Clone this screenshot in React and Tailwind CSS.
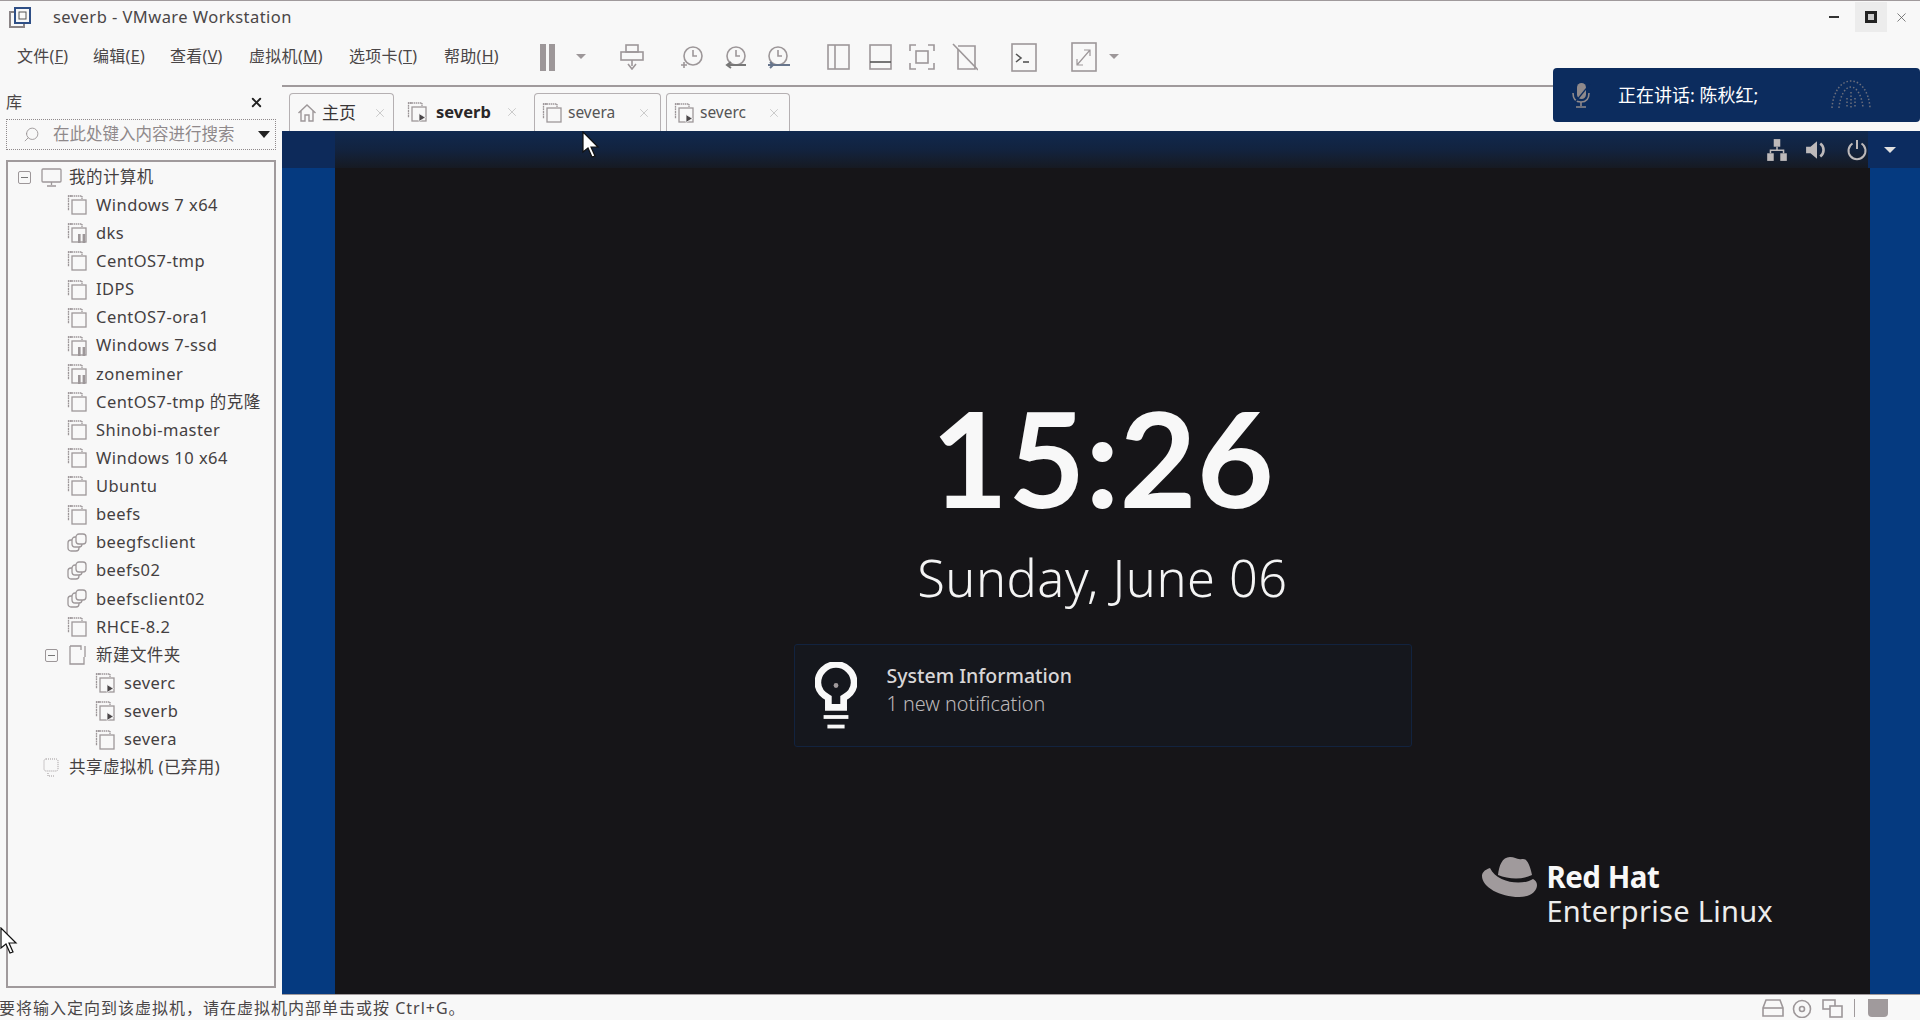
import React from "react";
import { X, Search } from "lucide-react";

const G = "#9d9799";
const UI = { fontFamily: '"Noto Sans", "Noto Sans CJK SC", sans-serif' };

function VmIcon({ kind = "plain" }) {
  return (
    <svg width="20" height="20" viewBox="0 0 20 20" fill="none" stroke={G} strokeWidth="1.3" className="shrink-0">
      {kind === "shared" ? (
        <>
          <rect x="1" y="7" width="11" height="11" rx="3" />
          <rect x="5" y="4" width="10" height="10" rx="3" fill="#f8f8f8" />
          <rect x="9" y="1" width="10" height="10" rx="3" fill="#f8f8f8" />
        </>
      ) : (
        <>
          <path d="M5 1H1.5V16" strokeDasharray="2 .6" />
          <path d="M1 1H15V4" strokeDasharray="1.4 .6" />
          <rect x="5" y="5" width="14" height="14" fill="#f8f8f8" />
        </>
      )}
      {kind === "pause" && (
        <>
          <rect x="11" y="11" width="2.6" height="9" fill={G} stroke="none" />
          <rect x="15.6" y="11" width="2.6" height="9" fill={G} stroke="none" />
        </>
      )}
      {kind === "play" && <path d="M12 11.5L18.5 15.5L12 19.5Z" fill="#4a4648" stroke="#f8f8f8" strokeWidth=".8" />}
    </svg>
  );
}

function Minus() {
  return (
    <span className="flex h-[13px] w-[13px] shrink-0 items-center justify-center rounded-[2px] border border-[#9d9799]">
      <span className="h-px w-[7px] bg-[#777]" />
    </span>
  );
}

function Row({ children }) {
  return <div className="flex h-[28.13px] items-center whitespace-nowrap text-[16.5px] tracking-[.45px] text-[#444041]">{children}</div>;
}

function VmRow({ name, kind, nested }) {
  return (
    <Row>
      <span className={nested ? "ml-[95px]" : "ml-[67px]"}><VmIcon kind={kind} /></span>
      <span className="ml-[9px]">{name}</span>
    </Row>
  );
}

function Tab({ w, label, bold, icon, ml, textCls, xGap }) {
  return (
    <div className={`flex h-[38px] items-center rounded-t-[4px] ${bold ? "" : "border border-b-0 border-[#b5b0b2]"} ${w} ${ml}`}>
      {icon}
      <span className={textCls}>{label}</span>
      <X size={14} strokeWidth={1} color="#aaa" className={`ml-auto ${xGap}`} />
    </div>
  );
}

function Tool({ ml, children }) {
  return <span className={`flex items-center ${ml}`}>{children}</span>;
}

const S = { fill: "none", stroke: G, strokeWidth: 1.6 };

function Clock({ arrow }) {
  return (
    <svg width="28" height="24" viewBox="0 0 28 24" {...S}>
      <circle cx="14" cy="11" r="9" />
      <path d="M14 5V11H18" />
      {arrow === "plus" && <path d="M5 17V23M2 20H8" />}
      {arrow === "left" && <path d="M24 20H5M9 17L5 20L9 23" strokeWidth="2" stroke="#777" />}
      {arrow === "right" && <path d="M4 20H26M6 17L9 20L6 23" strokeWidth="2" stroke="#67758c" />}
    </svg>
  );
}

function Caret({ cls = "", color = G }) {
  return <span className={`h-0 w-0 border-x-[5px] border-t-[5px] border-x-transparent ${cls}`} style={{ borderTopColor: color }} />;
}

function Cursor({ cls }) {
  return (
    <svg width="19" height="28" viewBox="0 0 19 28" className={`absolute ${cls}`}>
      <path d="M1 1V21L6 17L10 26L13 25L9 16L16 16Z" fill="#fff" stroke="#111" strokeWidth="1.2" />
    </svg>
  );
}

const items = [
  ["Windows 7 x64"], ["dks", "pause"], ["CentOS7-tmp"], ["IDPS"], ["CentOS7-ora1"], ["Windows 7-ssd", "pause"],
  ["zoneminer", "pause"], ["CentOS7-tmp 的克隆"], ["Shinobi-master"], ["Windows 10 x64"], ["Ubuntu"], ["beefs"],
  ["beegfsclient", "shared"], ["beefs02", "shared"], ["beefsclient02", "shared"], ["RHCE-8.2"],
];

export default function App() {
  return (
    <div className="relative flex h-[1020px] w-[1920px] flex-col overflow-hidden border-t border-[#a09a9c] bg-[#f8f8f8] text-[#3a3637]" style={UI}>
      {/* title bar */}
      <div className="flex h-[32px] shrink-0 items-center">
        <svg width="22" height="22" viewBox="0 0 22 22" fill="none" className="ml-[9px]">
          <rect x="1" y="6" width="14" height="15" stroke="#8a8486" strokeWidth="2" />
          <rect x="6" y="2" width="15" height="15" fill="#f8f8f8" stroke="#2f4f86" strokeWidth="2" />
          <rect x="10" y="6" width="7" height="7" stroke="#555" />
        </svg>
        <span className="ml-[22px] text-[16.5px] tracking-[.45px] text-[#4a4647]">severb - VMware Workstation</span>
        <span className="ml-auto mr-[16px] h-[2px] w-[10px] bg-[#333]" />
        <span className="mr-[7px] flex h-[30px] w-[32px] items-center justify-center bg-[#ececec]">
          <span className="h-[12px] w-[12px] border-[3px] border-[#222] bg-[#ccc]" />
        </span>
        <X size={15} strokeWidth={1.2} color="#555" className="mr-[11px]" />
      </div>

      {/* toolbar */}
      <div className="flex h-[52px] shrink-0 items-center pb-[6px] text-[16px] tracking-[.3px] text-[#4a4647]">
        <span className="ml-[17px] w-[76px]">文件(<u>F</u>)</span>
        <span className="w-[77px]">编辑(<u>E</u>)</span>
        <span className="w-[79px]">查看(<u>V</u>)</span>
        <span className="w-[100px]">虚拟机(<u>M</u>)</span>
        <span className="w-[95px]">选项卡(<u>T</u>)</span>
        <span className="w-[96px]">帮助(<u>H</u>)</span>
        <span className="mt-[2px] flex gap-[3px]">
          <span className="h-[27px] w-[6px] bg-[#9d9799]" />
          <span className="h-[27px] w-[6px] bg-[#9d9799]" />
        </span>
        <Caret cls="ml-[21px]" />
        <Tool ml="ml-[34px] mt-[2px]">
          <svg width="24" height="26" viewBox="0 0 24 26" {...S}>
            <rect x="6" y="1" width="12" height="7" />
            <rect x="1" y="8" width="22" height="8" />
            <path d="M12 16V22M8 20L12 25L16 20" />
          </svg>
        </Tool>
        <Tool ml="ml-[35px] mt-[2px]"><Clock arrow="plus" /></Tool>
        <Tool ml="ml-[15px] mt-[2px]"><Clock arrow="left" /></Tool>
        <Tool ml="ml-[14px] mt-[2px]"><Clock arrow="right" /></Tool>
        <Tool ml="ml-[35px] mt-[2px]">
          <svg width="23" height="26" viewBox="0 0 23 26" {...S}><rect x="1" y="1" width="21" height="24" /><path d="M8 1V25" /></svg>
        </Tool>
        <Tool ml="ml-[19px] mt-[2px]">
          <svg width="23" height="26" viewBox="0 0 23 26" {...S}><rect x="1" y="1" width="21" height="24" /><path d="M1 18H22" stroke="#555" /></svg>
        </Tool>
        <Tool ml="ml-[17px] mt-[2px]">
          <svg width="26" height="26" viewBox="0 0 26 26" {...S}><path d="M7 1H1V7M19 1H25V7M7 25H1V19M19 25H25V19" /><rect x="7" y="7" width="12" height="12" /></svg>
        </Tool>
        <Tool ml="ml-[17px] mt-[2px]">
          <svg width="26" height="28" viewBox="0 0 26 28" {...S}><path d="M6 3H23V26H6V6" /><path d="M1 1L26 27" /></svg>
        </Tool>
        <Tool ml="ml-[33px] mt-[2px]">
          <svg width="26" height="29" viewBox="0 0 26 29" {...S}><rect x="1" y="1" width="24" height="27" /><path d="M5 11L10 15L5 19" stroke="#555" /><path d="M12 19H18" stroke="#555" /></svg>
        </Tool>
        <Tool ml="ml-[34px] mt-[2px]">
          <svg width="26" height="30" viewBox="0 0 26 30" {...S}><rect x="1" y="1" width="24" height="28" /><path d="M6 23L19 8M13 8H19V14M6 17V23H12" strokeWidth="1.2" /></svg>
        </Tool>
        <Caret cls="ml-[12px]" />
      </div>

      {/* body */}
      <div className="flex min-h-0 flex-1">
        <aside className="flex w-[282px] shrink-0 flex-col">
          <div className="flex h-[34px] shrink-0 items-center justify-between pl-[6px] pr-[18px] text-[16px] text-[#4a4647]">
            <span>库</span>
            <X size={15} strokeWidth={3} color="#222" />
          </div>
          <div className="ml-[6px] flex h-[31px] w-[270px] shrink-0 items-center border border-dotted border-[#8f898b] text-[16.5px] text-[#8f898b]">
            <Search size={17} strokeWidth={1.3} color={G} className="ml-[16px] -scale-x-100" />
            <span className="ml-[13px]">在此处键入内容进行搜索</span>
            <Caret cls="ml-auto mr-[5px] border-x-[6px] border-t-[7px]" color="#222" />
          </div>
          <div className="ml-[6px] mt-[10px] h-[828px] w-[270px] border-2 border-[#a09a9c] pt-[1px]">
            <div className="-ml-[8px]">
              <Row>
                <span className="ml-[18px]"><Minus /></span>
                <svg width="21" height="19" viewBox="0 0 21 19" fill="none" stroke={G} strokeWidth="1.3" className="ml-[10px]">
                  <rect x="1" y="1" width="19" height="13" rx="1" /><path d="M10.5 14V17M6 18H15" />
                </svg>
                <span className="ml-[7px]">我的计算机</span>
              </Row>
              {items.map(([n, k]) => <VmRow key={n} name={n} kind={k} />)}
              <Row>
                <span className="ml-[45px]"><Minus /></span>
                <svg width="17" height="20" viewBox="0 0 17 20" fill="none" stroke={G} strokeWidth="1.3" className="ml-[11px]">
                  <path d="M1 1H12V5M16 1V12M1 1V19H15V12" />
                </svg>
                <span className="ml-[10px]">新建文件夹</span>
              </Row>
              <VmRow name="severc" kind="play" nested />
              <VmRow name="severb" kind="play" nested />
              <VmRow name="severa" nested />
              <Row>
                <svg width="16" height="19" viewBox="0 0 16 19" fill="none" stroke={G} strokeWidth="1" strokeDasharray="1 1" className="ml-[43px]">
                  <rect x="1" y="1" width="14" height="12" rx="2" /><path d="M5 15V18H11" />
                </svg>
                <span className="ml-[10px]">共享虚拟机 (已弃用)</span>
              </Row>
            </div>
          </div>
        </aside>

        <main className="flex min-w-0 flex-1 flex-col border-t-2 border-[#a09a9c]">
          {/* tabs */}
          <div className="flex h-[44px] shrink-0 items-end pl-[7px] text-[#3a3637]">
            <Tab
              w="w-[105px]" label="主页" textCls="ml-[5px] text-[17px]" xGap="mr-[6px]"
              icon={
                <svg width="20" height="20" viewBox="0 0 20 20" fill="none" stroke={G} strokeWidth="1.4" className="ml-[7px]">
                  <path d="M1.5 10L10 2L18.5 10M4 8V18H8V12H12V18H16V8" />
                </svg>
              }
            />
            <Tab
              w="w-[140px]" label="severb" bold textCls="ml-[9px] text-[16.5px] font-bold text-[#2a2728]" xGap="mr-[15px]"
              icon={<span className="ml-[13px]"><VmIcon kind="play" /></span>}
            />
            <Tab
              w="w-[127px]" label="severa" textCls="ml-[6px] text-[15.5px] text-[#555]" xGap="mr-[9px]"
              icon={<span className="ml-[7px]"><VmIcon /></span>}
            />
            <Tab
              w="w-[124px]" ml="ml-[5px]" label="severc" textCls="ml-[6px] text-[15.5px] text-[#555]" xGap="mr-[8px]"
              icon={<span className="ml-[7px]"><VmIcon kind="play" /></span>}
            />
          </div>

          {/* vm screen */}
          <div className="flex h-[864px] shrink-0 flex-col border-b border-[#a09a9c] bg-[#161518]">
            <div className="flex h-[37px] shrink-0 items-center bg-gradient-to-b from-[#10294f] via-[#12233f] to-[#161a22]">
              <span className="h-full w-[53px] bg-[#0d2a5a]" />
              <span className="ml-auto flex items-center">
                <svg width="22" height="24" viewBox="0 0 20 22" fill="#bdb9ba">
                  <rect x="7" y="1" width="6" height="7" /><rect x="1" y="14" width="6" height="7" /><rect x="13" y="14" width="6" height="7" />
                  <path d="M9.3 8H10.7V10.5H16.7V14H15.3V12H4.7V14H3.3V10.5H9.3Z" />
                </svg>
                <svg width="24" height="22" viewBox="0 0 22 20" className="ml-[17px]" fill="#bdb9ba">
                  <path d="M1 7H5L11 2V18L5 13H1Z" />
                  <path d="M14 4C18 7 18 13 14 16" fill="none" stroke="#bdb9ba" strokeWidth="2.4" />
                </svg>
                <svg width="22" height="22" viewBox="0 0 22 22" className="ml-[17px]" fill="none" stroke="#bdb9ba" strokeWidth="2">
                  <path d="M6.5 4.5A8.5 8.5 0 1 0 15.5 4.5M11 1V10" />
                </svg>
                <span className="flex h-[37px] w-[52px] items-center bg-[#0c2c60] pl-[16px]">
                  <Caret cls="border-x-[6px] border-t-[6px]" color="#e0e0e0" />
                </span>
              </span>
            </div>
            <div className="flex min-h-0 flex-1">
              <div className="w-[53px] shrink-0 bg-[#053a80]" />
              <div className="flex min-w-0 flex-1 flex-col items-center text-white" style={{ fontFamily: '"Noto Sans", sans-serif' }}>
                <div className="mt-[224px] text-[133px] font-bold leading-[130px] text-[#f8f8f8]" style={{ fontFamily: "Lato, sans-serif" }}>15:26</div>
                <div className="mt-[23px] text-[50.5px] font-light leading-[66px] tracking-[.5px] text-[#f4f4f4]">Sunday, June 06</div>
                <div className="mt-[33px] flex h-[103px] w-[618px] shrink-0 items-center rounded-[3px] border border-[#12233f] bg-[#15171d]">
                  <svg width="42" height="68" viewBox="0 0 44 70" fill="none" className="ml-[20px] shrink-0">
                    <path d="M14 47V37C7 33 3 28 3 21A19 19 0 0 1 41 21C41 28 37 33 30 37V47Z" stroke="#f8f8f8" strokeWidth="7" />
                    <path d="M9 57H35" stroke="#f8f8f8" strokeWidth="4" />
                    <path d="M13 67H31" stroke="#f8f8f8" strokeWidth="4" />
                    <circle cx="22" cy="24" r="2.5" fill="#a09a9c" />
                  </svg>
                  <div className="mb-[12px] ml-[30px] flex flex-col gap-[4px]">
                    <span className="text-[19.5px] font-medium leading-[24px] text-[#d8d6d7]">System Information</span>
                    <span className="text-[19.8px] font-light leading-[24px] text-[#bdb9ba]">1 new notification</span>
                  </div>
                </div>
                <div className="mt-[115px] flex w-full items-start justify-end pr-[97px]">
                  <svg width="56" height="42" viewBox="0 0 56 42" fill="#a09a9c" className="-mt-[6px]">
                    <path d="M16 19C17 10 20 1 28 1C33 1 35 4 40 3C45 2 48 9 50 19C40 24 26 23 16 19Z" />
                    <path d="M8 12C2 14 0 17 0 20C0 31 18 41 37 41C49 41 55 35 55 29C55 26 53 24 51 23C40 30 15 27 8 12Z" />
                  </svg>
                  <div className="ml-[8px] flex flex-col gap-[4px]">
                    <span className="text-[29.5px] font-bold leading-[30px] tracking-[-.5px] text-[#f8f8f8]">Red Hat</span>
                    <span className="text-[29px] font-normal leading-[30px] tracking-[.3px] text-[#ececec]">Enterprise Linux</span>
                  </div>
                </div>
              </div>
              <div className="w-[50px] shrink-0 bg-[#053a80]" />
            </div>
          </div>
        </main>
      </div>

      {/* status */}
      <div className="flex h-[24px] shrink-0 items-center whitespace-nowrap text-[16px] tracking-[1px] text-[#4a4647]">
        <span className="-ml-[1px]">要将输入定向到该虚拟机，请在虚拟机内部单击或按 Ctrl+G。</span>
        <span className="ml-auto flex items-center">
          <svg width="22" height="18" viewBox="0 0 22 18" {...S}><path d="M4 1H18L21 9V17H1V9Z" /><path d="M1 9H21" /></svg>
          <svg width="21" height="19" viewBox="0 0 21 19" className="ml-[8px]" {...S}><circle cx="10" cy="10" r="8.5" /><circle cx="10" cy="10" r="2.5" /></svg>
          <svg width="21" height="19" viewBox="0 0 21 19" className="ml-[9px]" {...S}><rect x="1" y="1" width="12" height="9" /><rect x="8" y="7" width="12" height="11" fill="#f8f8f8" /></svg>
          <span className="ml-[11px] h-[18px] w-px bg-[#a09a9c]" />
          <span className="ml-[13px] mr-[32px] h-[18px] w-[20px] rounded-b-[4px] bg-[#a09a9c]" />
        </span>
      </div>

      {/* speaking banner */}
      <div className="absolute left-[1553px] top-[67px] flex h-[54px] w-[367px] items-center rounded-[4px] bg-[#0c2c5e] text-[18px] text-white">
        <svg width="20" height="26" viewBox="0 0 20 26" fill="#8f898b" className="ml-[18px]">
          <rect x="6" y="1" width="9" height="16" rx="4.5" />
          <path d="M2 11C2 17 5 20 10 20C15 20 18 17 18 11" fill="none" stroke="#8f898b" strokeWidth="1.6" />
          <path d="M10 20V24M5 25H15" stroke="#8f898b" strokeWidth="1.6" />
          <path d="M1 24L19 2" stroke="#0c2c5e" strokeWidth="1.2" />
        </svg>
        <span className="ml-[27px]">正在讲话: 陈秋红;</span>
        <svg width="44" height="34" viewBox="0 0 44 34" fill="none" stroke="#6c6f7c" strokeWidth="1.5" strokeDasharray="1.5 2" className="ml-auto mr-[47px]">
          <path d="M3 30C4 14 12 3 22 3C32 3 40 14 41 30" />
          <path d="M10 30C11 18 16 9 22 9C28 9 33 18 34 30" />
          <path d="M22 14V31M18 20V30M26 20V30" />
        </svg>
      </div>

      <Cursor cls="left-[582px] top-[130px]" />
      <Cursor cls="left-0 top-[926px]" />
    </div>
  );
}
